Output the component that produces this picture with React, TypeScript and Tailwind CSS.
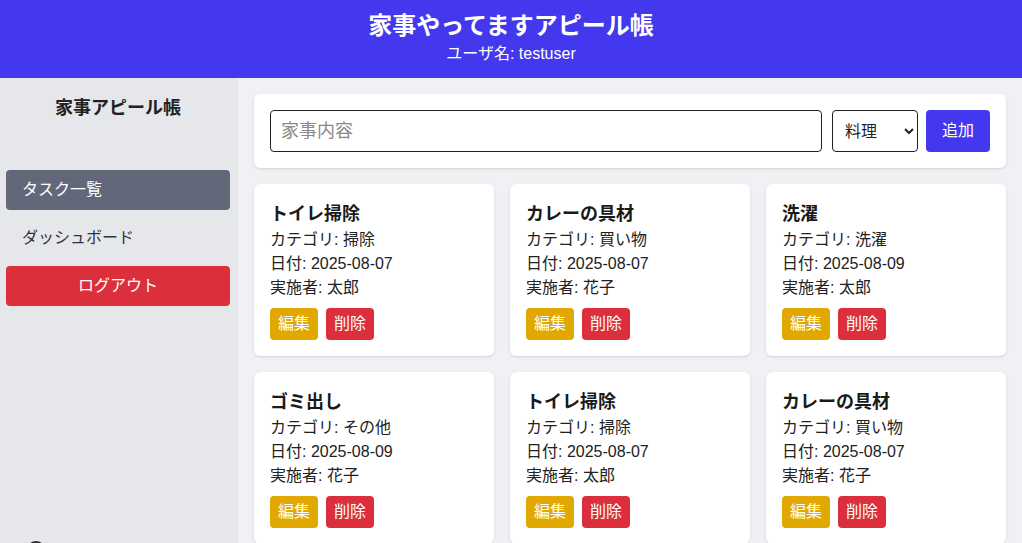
import React from 'react';

interface Task {
  title: string;
  category: string;
  date: string;
  doer: string;
}

const tasks: Task[] = [
  { title: 'トイレ掃除', category: '掃除', date: '2025-08-07', doer: '太郎' },
  { title: 'カレーの具材', category: '買い物', date: '2025-08-07', doer: '花子' },
  { title: '洗濯', category: '洗濯', date: '2025-08-09', doer: '太郎' },
  { title: 'ゴミ出し', category: 'その他', date: '2025-08-09', doer: '花子' },
  { title: 'トイレ掃除', category: '掃除', date: '2025-08-07', doer: '太郎' },
  { title: 'カレーの具材', category: '買い物', date: '2025-08-07', doer: '花子' },
];

const font = { fontFamily: '"Liberation Sans", "Noto Sans CJK JP", sans-serif' };

const App: React.FC = () => {
  return (
    <div className="min-h-screen flex flex-col text-[#222]" style={font}>
      <header className="bg-[#4338ee] text-white text-center pt-[10px] pb-[12px]">
        <h1 className="text-2xl font-bold">家事やってますアピール帳</h1>
        <p className="text-base leading-6">ユーザ名: testuser</p>
      </header>

      <div className="flex flex-1">
        <aside className="w-[238px] shrink-0 bg-[#e5e7eb] pt-4 pl-[6px] pr-[8px] flex flex-col">
          <h2 className="text-lg font-bold text-center text-[#222]">家事アピール帳</h2>
          <nav className="mt-[48px] flex flex-col gap-2">
            <a className="block h-10 leading-10 px-4 rounded bg-[#626879] text-white">タスク一覧</a>
            <a className="block h-10 leading-10 px-4 rounded text-[#333]">ダッシュボード</a>
            <button className="h-10 rounded bg-[#db2f3b] text-white">ログアウト</button>
          </nav>
          <div className="mt-[235px] ml-[20px] w-5 h-5 rounded-full bg-[#2a2a2a]" />
        </aside>

        <main className="flex-1 bg-[#f0f1f5] p-4 flex flex-col gap-4">
          <div className="bg-white rounded-md shadow p-4 flex items-center">
            <input
              placeholder="家事内容"
              className="flex-1 h-[42px] border border-[#222] rounded px-[10px] text-lg placeholder:text-[#8a8a8a]"
            />
            <select className="ml-[10px] w-[86px] h-[42px] border border-[#222] rounded pl-2 pr-1 text-base bg-white">
              <option>料理</option>
              <option>掃除</option>
              <option>洗濯</option>
              <option>買い物</option>
              <option>その他</option>
            </select>
            <button className="ml-2 w-16 h-[42px] rounded bg-[#4338ee] text-white">追加</button>
          </div>

          <div className="grid grid-cols-3 gap-4">
            {tasks.map((t, i) => (
              <div key={i} className="bg-white rounded-md shadow p-4">
                <h3 className="text-lg font-bold text-[#1a1a1a]">{t.title}</h3>
                <p className="leading-6">カテゴリ: {t.category}</p>
                <p className="leading-6">日付: {t.date}</p>
                <p className="leading-6">実施者: {t.doer}</p>
                <div className="mt-2 flex gap-2">
                  <button className="h-8 px-2 rounded bg-[#e0a800] text-white">編集</button>
                  <button className="h-8 px-2 rounded bg-[#db2f3b] text-white">削除</button>
                </div>
              </div>
            ))}
          </div>
        </main>
      </div>
    </div>
  );
};

export default App;
